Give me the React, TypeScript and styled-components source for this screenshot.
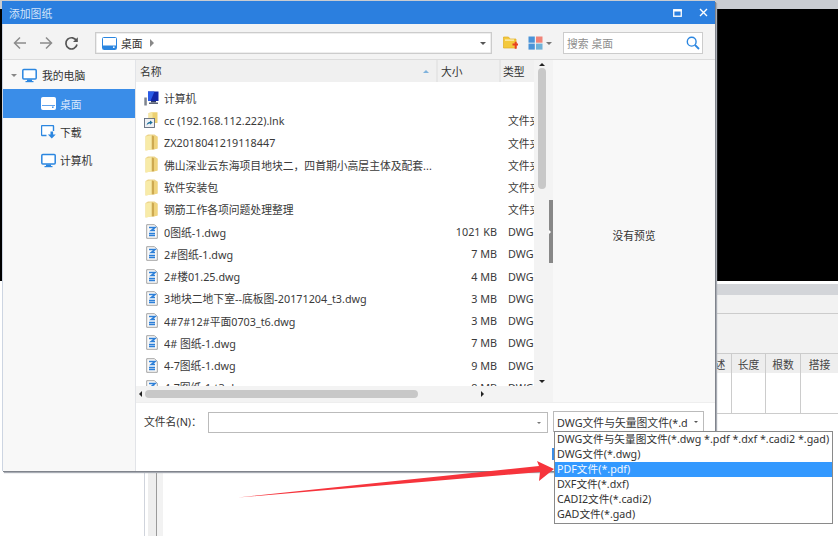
import React from "react";
import styled, { createGlobalStyle } from "styled-components";

const Global = createGlobalStyle`
  html, body { margin: 0; padding: 0; background: #fff; }
  body { width: 838px; height: 536px; overflow: hidden; font-family: "Noto Sans", "Noto Sans CJK SC", sans-serif; font-size: 10.8px; color: #333; }
  * { box-sizing: border-box; }
`;

const Page = styled.div`
  position: relative;
  width: 838px;
  height: 536px;
  overflow: hidden;
  display: flex;
  flex-direction: column;
  background: #fff;
`;
const TopStrip = styled.div`height: 9px; background: #c9ccd1; flex: none;`;
const BlackPane = styled.div`height: 272px; background: #000; flex: none;`;
const Lower = styled.div`
  flex: 1;
  display: flex;
  border-top: 3px solid #fff;
`;
const LeftCol = styled.div`
  width: 145px;
  flex: none;
  border-right: 1px solid #d0d4dc;
`;
const Band = styled.div<{ $w: number; $tone: string }>`
  width: ${(p) => p.$w}px;
  flex: none;
  background: ${(p) => p.$tone};
`;
const RightPanel = styled.div`
  flex: 1;
  display: flex;
  flex-direction: column;
  min-width: 0;
`;
const GreyBar = styled.div`height: 11px; background: #d3d5d9; flex: none;`;
const PanelStrip = styled.div<{ $h: number }>`
  height: ${(p) => p.$h}px;
  flex: none;
  background: #f2f2f2;
  border-bottom: 1px solid #ccc;
`;
const BgTable = styled.div`
  display: flex;
  justify-content: flex-end;
  height: 60px;
  flex: none;
  border-bottom: 1px solid #ccc;
`;
const BgCol = styled.div<{ $w: number }>`
  width: ${(p) => p.$w}px;
  display: flex;
  flex-direction: column;
  border-right: 1px solid #ccc;
  &:last-child { border-right: none; }
`;
const BgHead = styled.div`
  height: 19px;
  background: #eee;
  display: flex;
  align-items: center;
  justify-content: center;
  color: #444;
  white-space: nowrap;
`;

const Dialog = styled.div`
  position: absolute;
  left: 2px;
  top: 1px;
  width: 713px;
  height: 470px;
  display: flex;
  flex-direction: column;
  background: #fff;
  border-left: 1px solid #cdd5e2;
  box-shadow: 1px 1px 0 #80848c, 2px 2px 1px #a8acb4;
`;
const TitleBar = styled.div`
  height: 23px;
  flex: none;
  background: #2b7fdf;
  color: #d4e5fa;
  display: flex;
  align-items: center;
  padding: 0 7px 0 7px;
  font-size: 10.8px;
  margin-left: -1px;
`;
const TitleText = styled.span`flex: 1;`;
const WinButton = styled.span<{ $mr: number }>`
  display: flex;
  margin-right: ${(p) => p.$mr}px;
`;
const Toolbar = styled.div`
  height: 36px;
  flex: none;
  display: flex;
  align-items: center;
  background: #f3f3f3;
  border-bottom: 1px solid #dcdcdc;
  padding: 3px 0 0 10px;
`;
const NavButton = styled.span<{ $mr: number }>`
  display: flex;
  margin-right: ${(p) => p.$mr}px;
`;
const AddressBox = styled.div`
  width: 397px;
  height: 22px;
  border: 1px solid #ccc;
  box-shadow: inset 0 0 0 0.5px #ddd;
  background: #fff;
  display: flex;
  align-items: center;
  padding: 0 5px 0 6px;
  margin-right: 11px;
  color: #333;
`;
const AddressText = styled.span`margin: 0 7px 0 4px;`;
const Spacer = styled.span`flex: 1;`;
const Caret = styled.span<{ $dir: "up" | "down" | "left" | "right"; $c?: string; $s?: number }>`
  display: inline-block;
  flex: none;
  width: 0;
  height: 0;
  border: ${(p) => p.$s ?? 3}px solid transparent;
  ${(p) =>
    p.$dir === "down"
      ? `border-top-color:${p.$c ?? "#555"};border-bottom-width:0;`
      : p.$dir === "up"
      ? `border-bottom-color:${p.$c ?? "#555"};border-top-width:0;`
      : p.$dir === "left"
      ? `border-right-color:${p.$c ?? "#333"};border-left-width:0;`
      : `border-left-color:${p.$c ?? "#333"};border-right-width:0;`}
`;
const ToolIcon = styled.span<{ $mr: number }>`
  display: flex;
  align-items: center;
  gap: 3px;
  margin-right: ${(p) => p.$mr}px;
`;
const SearchBox = styled.div`
  width: 140px;
  height: 22px;
  border: 1px solid #ccc;
  background: #fff;
  display: flex;
  align-items: center;
  justify-content: space-between;
  padding: 0 2px 0 3px;
  color: #8e8e8e;
`;
const Body = styled.div`
  flex: 1;
  display: flex;
  min-height: 0;
`;
const Sidebar = styled.div`
  width: 133px;
  flex: none;
  background: #f8f8f8;
  border-right: 1px solid #e2e4e8;
  padding-top: 1px;
`;
const TreeRow = styled.div<{ $active?: boolean; $indent: number; $gap: number }>`
  height: 28.4px;
  display: flex;
  align-items: center;
  padding-left: ${(p) => p.$indent}px;
  gap: ${(p) => p.$gap}px;
  background: ${(p) => (p.$active ? "#3a8de8" : "transparent")};
  color: ${(p) => (p.$active ? "#d8e8fb" : "#333")};
`;
const Right = styled.div`
  flex: 1;
  min-width: 0;
  display: flex;
  flex-direction: column;
`;
const Panes = styled.div`
  height: 342px;
  flex: none;
  display: flex;
`;
const FileColumn = styled.div`
  width: 413px;
  flex: none;
  display: flex;
  flex-direction: column;
`;
const ListAndBar = styled.div`
  flex: 1;
  min-height: 0;
  display: flex;
`;
const ListArea = styled.div`
  width: 398px;
  flex: none;
  display: flex;
  flex-direction: column;
  min-height: 0;
`;
const HeaderRow = styled.div`
  height: 22px;
  flex: none;
  display: flex;
  background: #f0f0f0;
  color: #333;
  align-items: center;
`;
const HeadName = styled.div`
  width: 302px;
  padding: 0 7px 0 4px;
  height: 100%;
  display: flex;
  align-items: center;
  justify-content: space-between;
  border-right: 2px solid #e6e6e6;
`;
const HeadSize = styled.div`
  width: 63px;
  padding-left: 3px;
  height: 100%;
  display: flex;
  align-items: center;
  border-right: 2px solid #e6e6e6;
`;
const HeadType = styled.div`
  flex: 1;
  padding-left: 2px;
`;
const Rows = styled.div`
  flex: 1;
  min-height: 0;
  overflow: hidden;
  padding-top: 5px;
  background: #fff;
`;
const FileRow = styled.div`
  height: 22.25px;
  display: flex;
  align-items: center;
  color: #3a3a3a;
`;
const IconCell = styled.span`
  width: 28px;
  flex: none;
  display: flex;
  justify-content: center;
  padding-left: 3px;
`;
const NameCell = styled.span`
  width: 272px;
  flex: none;
  white-space: nowrap;
  overflow: hidden;
`;
const SizeCell = styled.span`
  width: 61px;
  flex: none;
  text-align: right;
  white-space: nowrap;
`;
const TypeCell = styled.span`
  margin-left: 11px;
  flex: 1;
  min-width: 0;
  white-space: nowrap;
  overflow: hidden;
`;
const VScroll = styled.div`
  width: 15px;
  flex: none;
  background: #f3f3f3;
  display: flex;
  flex-direction: column;
  align-items: center;
  padding: 3px 0 3px 1px;
`;
const VThumb = styled.div`
  width: 8px;
  height: 121px;
  margin-top: 2px;
  background: #c8c8c8;
  border-radius: 4px;
`;
const HScroll = styled.div`
  height: 16px;
  flex: none;
  background: #f3f3f3;
  display: flex;
  align-items: center;
  padding: 0 3px 0 3px;
`;
const HThumb = styled.div`
  width: 273px;
  height: 8px;
  margin-left: 3px;
  background: #c8c8c8;
  border-radius: 4px;
`;
const Splitter = styled.div`
  width: 4px;
  flex: none;
  background: #f3f3f3;
  display: flex;
  align-items: flex-start;
`;
const SplitGrip = styled.div`
  width: 4px;
  height: 63px;
  margin-top: 140px;
  background: #888;
  display: flex;
  align-items: center;
`;
const Preview = styled.div`
  flex: 1;
  background: #f8f8f8;
  display: flex;
  align-items: center;
  justify-content: center;
  padding-top: 8px;
  color: #333;
`;
const Footer = styled.div`
  flex: 1;
  background: #fff;
  display: flex;
  align-items: flex-start;
  padding: 9px 0 0 8px;
  border-top: 1px solid #eee;
`;
const FileLabel = styled.span`
  width: 64px;
  flex: none;
  line-height: 20px;
`;
const NameInput = styled.div`
  width: 340px;
  height: 21px;
  flex: none;
  border: 1px solid #bbb;
  background: #fff;
  display: flex;
  align-items: center;
  justify-content: flex-end;
  padding-right: 6px;
  margin-right: 5px;
`;
const TypeCombo = styled.div`
  width: 151px;
  height: 21px;
  flex: none;
  border: 1px solid #bbb;
  margin-top: -1px;
  background: #fff;
  display: flex;
  align-items: center;
  justify-content: space-between;
  padding: 0 5px 0 3px;
  white-space: nowrap;
  overflow: hidden;
`;
const HiddenEdge = styled.div`
  position: absolute;
  left: 552px;
  top: 448px;
  width: 2px;
  height: 12px;
  background: #3a8de8;
`;
const Dropdown = styled.div`
  position: absolute;
  left: 554px;
  top: 431px;
  width: 279px;
  height: 93px;
  background: #fff;
  border: 1px solid #8a8a8a;
  font-size: 10.7px;
`;
const Option = styled.div<{ $active?: boolean }>`
  height: 15px;
  line-height: 15px;
  padding-left: 2px;
  white-space: nowrap;
  background: ${(p) => (p.$active ? "#3399ff" : "transparent")};
  color: ${(p) => (p.$active ? "#f2f8ff" : "#333")};
`;
const ArrowLayer = styled.svg`
  position: absolute;
  left: 230px;
  top: 455px;
`;

const Monitor = ({ color = "#2b86e0", size = 15 }: { color?: string; size?: number }) => (
  <svg width={size} height={size} viewBox="0 0 15 15">
    <rect x="0.8" y="1.5" width="13.4" height="9.6" rx="1" fill="#fff" stroke={color} strokeWidth="1.5" />
    <rect x="5" y="11.5" width="5" height="1.6" fill={color} />
    <rect x="3.5" y="13" width="8" height="1.2" fill={color} />
  </svg>
);
const DesktopIcon = ({ light }: { light?: boolean }) => (
  <svg width="15" height="13" viewBox="0 0 15 13">
    <rect x="0.5" y="0.5" width="14" height="12" rx="1" fill="#fff" stroke={light ? "#fff" : "#2b86e0"} />
    <rect x="1" y="8.5" width="13" height="3.5" fill={light ? "#fff" : "#2b86e0"} />
    {light && <rect x="1" y="8" width="13" height="0.8" fill="#3a8de8" />}
    <rect x="11" y="9.5" width="1.6" height="1.4" fill={light ? "#3a8de8" : "#fff"} />
  </svg>
);
const DownloadIcon = () => (
  <svg width="15" height="14" viewBox="0 0 15 14">
    <path d="M5.5 10.5H1.5a1 1 0 0 1-1-1V1.5a1 1 0 0 1 1-1h10a1 1 0 0 1 1 1V6" fill="#fff" stroke="#2b86e0" strokeWidth="1.4" />
    <path d="M9.5 6.5h2.6v3h2.6l-3.9 4-3.9-4h2.6z" fill="#2b86e0" />
  </svg>
);
const FolderIcon = () => (
  <svg width="13" height="17" viewBox="0 0 13 17">
    <path d="M0.5 2 3 0.5H9.5L12.5 2.5V14.5L0.5 16.5z" fill="#ecd48a" />
    <path d="M0.5 2.5 6.8 1.2V15.4L0.5 16.5z" fill="#f8eba8" />
    <path d="M6.8 1.2 9.2 2.4V15.6L6.8 15.4z" fill="#cda950" />
    <path d="M9.2 2.4 12.5 2.8V14.5L9.2 15.6z" fill="#f0d47c" />
  </svg>
);
const DwgIcon = () => (
  <svg width="12" height="15" viewBox="0 0 12 15">
    <path d="M0.7 0.7H8.5L11.3 3.5V14.3H0.7z" fill="#fafafa" stroke="#9a9a9a" strokeWidth="0.9" />
    <path d="M3 3.6H9L5.2 6.6H9M3 9.5h6M3 11.6h6" fill="none" stroke="#2c7fd8" strokeWidth="1.5" />
  </svg>
);
const ComputerIcon = () => (
  <svg width="15" height="15" viewBox="0 0 15 15">
    <rect x="0.3" y="6.5" width="2.5" height="8" fill="#7d838e" />
    <path d="M4 0.5h10.5v9.5H4z" fill="#1227a8" />
    <path d="M4 0.5h6.5L6.5 10H4z" fill="#2a5ce8" />
    <rect x="7" y="10" width="5" height="1.5" fill="#2f3a66" />
    <rect x="5" y="11.5" width="9" height="1.5" fill="#5b6478" />
  </svg>
);
const LnkIcon = () => (
  <svg width="15" height="16" viewBox="0 0 15 16">
    <path d="M4.5 1 8 0.3H13.5V11H4.5z" fill="#ecd070" />
    <path d="M5 1 8.5 0.5V8H5z" fill="#f6e7a2" />
    <rect x="0.5" y="6.5" width="10" height="9" fill="#eef0f4" stroke="#5f6b7c" strokeWidth="0.9" />
    <path d="M2.5 13.5 C3 10.5 5 9.8 6 9.8 V8.4 L8.8 10.6 6 12.8 V11.5 C4.8 11.5 3.5 12 2.5 13.5z" fill="#1d6f9c" />
  </svg>
);

type F = { name: string; icon: "pc" | "lnk" | "folder" | "dwg"; size?: string; type?: string };
const files: F[] = [
  { name: "计算机", icon: "pc" },
  { name: "cc (192.168.112.222).lnk", icon: "lnk", type: "文件夹" },
  { name: "ZX2018041219118447", icon: "folder", type: "文件夹" },
  { name: "佛山深业云东海项目地块二，四首期小高层主体及配套...", icon: "folder", type: "文件夹" },
  { name: "软件安装包", icon: "folder", type: "文件夹" },
  { name: "钢筋工作各项问题处理整理", icon: "folder", type: "文件夹" },
  { name: "0图纸-1.dwg", icon: "dwg", size: "1021 KB", type: "DWG" },
  { name: "2#图纸-1.dwg", icon: "dwg", size: "7 MB", type: "DWG" },
  { name: "2#楼01.25.dwg", icon: "dwg", size: "4 MB", type: "DWG" },
  { name: "3地块二地下室--底板图-20171204_t3.dwg", icon: "dwg", size: "3 MB", type: "DWG" },
  { name: "4#7#12#平面0703_t6.dwg", icon: "dwg", size: "3 MB", type: "DWG" },
  { name: "4# 图纸-1.dwg", icon: "dwg", size: "7 MB", type: "DWG" },
  { name: "4-7图纸-1.dwg", icon: "dwg", size: "9 MB", type: "DWG" },
  { name: "4-7图纸-1-t3.dwg", icon: "dwg", size: "8 MB", type: "DWG" },
];

const iconFor = (k: F["icon"]) =>
  k === "pc" ? <ComputerIcon /> : k === "lnk" ? <LnkIcon /> : k === "folder" ? <FolderIcon /> : <DwgIcon />;

const options = [
  "DWG文件与矢量图文件(*.dwg *.pdf *.dxf *.cadi2 *.gad)",
  "DWG文件(*.dwg)",
  "PDF文件(*.pdf)",
  "DXF文件(*.dxf)",
  "CADI2文件(*.cadi2)",
  "GAD文件(*.gad)",
];

export default function App() {
  return (
    <Page>
      <Global />
      <TopStrip />
      <BlackPane />
      <Lower>
        <LeftCol />
        <Band $w={3} $tone="#fff" />
        <Band $w={8} $tone="#eeeeee" />
        <Band $w={1} $tone="#9a9a9a" />
        <Band $w={6} $tone="#f2f2f2" />
        <RightPanel>
          <GreyBar />
          <PanelStrip $h={19} />
          <PanelStrip $h={40} />
          <BgTable>
            <BgCol $w={34}><BgHead>描述</BgHead></BgCol>
            <BgCol $w={34}><BgHead>长度</BgHead></BgCol>
            <BgCol $w={35}><BgHead>根数</BgHead></BgCol>
            <BgCol $w={37}><BgHead>搭接</BgHead></BgCol>
          </BgTable>
        </RightPanel>
      </Lower>

      <Dialog>
        <TitleBar>
          <TitleText>添加图纸</TitleText>
          <WinButton $mr={17}>
            <svg width="9" height="8" viewBox="0 0 9 8">
              <rect x="0.75" y="0.75" width="7.5" height="6.5" fill="none" stroke="#fff" strokeWidth="1.3" />
              <rect x="0.5" y="0.5" width="8" height="2" fill="#fff" />
            </svg>
          </WinButton>
          <WinButton $mr={0}>
            <svg width="9" height="9" viewBox="0 0 9 9">
              <path d="M1 1l7 7M8 1l-7 7" stroke="#fff" strokeWidth="1.4" />
            </svg>
          </WinButton>
        </TitleBar>
        <Toolbar>
          <NavButton $mr={12}>
            <svg width="14" height="14" viewBox="0 0 14 14"><path d="M13 7H1.5M7 1.5 1.5 7 7 12.5" fill="none" stroke="#8c8c8c" strokeWidth="1.5" /></svg>
          </NavButton>
          <NavButton $mr={11}>
            <svg width="14" height="14" viewBox="0 0 14 14"><path d="M1 7h11.5M7 1.5 12.5 7 7 12.5" fill="none" stroke="#8c8c8c" strokeWidth="1.5" /></svg>
          </NavButton>
          <NavButton $mr={16}>
            <svg width="15" height="15" viewBox="0 0 15 15"><path d="M12.6 5A5.6 5.6 0 1 0 13 8.5" fill="none" stroke="#555" strokeWidth="1.7" /><path d="M13.8 1.2V6H9z" fill="#555" /></svg>
          </NavButton>
          <AddressBox>
            <DesktopIcon />
            <AddressText>桌面</AddressText>
            <Caret $dir="right" $c="#888" $s={4} />
            <Spacer />
            <Caret $dir="down" $c="#555" />
          </AddressBox>
          <ToolIcon $mr={10}>
            <svg width="15" height="14" viewBox="0 0 15 14">
              <path d="M0.5 1H5.5L7 3H13V12H0.5z" fill="#f4c93c" stroke="#dfae22" strokeWidth="0.7" />
              <rect x="2" y="3.5" width="9" height="1.2" fill="#fff3bf" />
              <path d="M9.5 7.5h2.2V5.7h2v1.8H15v2h-1.3v3.2h-2V9.5H9.5z" fill="#e8421f" />
            </svg>
          </ToolIcon>
          <ToolIcon $mr={11}>
            <svg width="15" height="14" viewBox="0 0 15 14">
              <rect x="0.5" y="0.5" width="6.3" height="6.2" fill="#4a93d8" />
              <rect x="8" y="0.5" width="6.5" height="6.2" fill="#f08378" />
              <rect x="0.5" y="7.6" width="6.3" height="6" fill="#4a93d8" />
              <rect x="8" y="7.6" width="6.5" height="6" fill="#6fb2d8" />
            </svg>
            <Caret $dir="down" $c="#777" />
          </ToolIcon>
          <SearchBox>
            <span>搜索 桌面</span>
            <svg width="14" height="14" viewBox="0 0 14 14">
              <circle cx="5.7" cy="5.7" r="4.4" fill="none" stroke="#2b86e0" strokeWidth="1.4" />
              <path d="M9 9l4 4" stroke="#2b86e0" strokeWidth="1.8" />
            </svg>
          </SearchBox>
        </Toolbar>
        <Body>
          <Sidebar>
            <TreeRow $indent={8} $gap={5}>
              <Caret $dir="down" $c="#888" $s={3.5} />
              <Monitor />
              <span>我的电脑</span>
            </TreeRow>
            <TreeRow $active $indent={38} $gap={4}>
              <DesktopIcon light />
              <span>桌面</span>
            </TreeRow>
            <TreeRow $indent={38} $gap={4}>
              <DownloadIcon />
              <span>下载</span>
            </TreeRow>
            <TreeRow $indent={38} $gap={4}>
              <Monitor />
              <span>计算机</span>
            </TreeRow>
          </Sidebar>
          <Right>
            <Panes>
              <FileColumn>
                <ListAndBar>
                  <ListArea>
                    <HeaderRow>
                      <HeadName>
                        <span>名称</span>
                        <Caret $dir="up" $c="#7fb2dc" />
                      </HeadName>
                      <HeadSize>大小</HeadSize>
                      <HeadType>类型</HeadType>
                    </HeaderRow>
                    <Rows>
                      {files.map((f) => (
                        <FileRow key={f.name}>
                          <IconCell>{iconFor(f.icon)}</IconCell>
                          <NameCell>{f.name}</NameCell>
                          <SizeCell>{f.size}</SizeCell>
                          <TypeCell>{f.type}</TypeCell>
                        </FileRow>
                      ))}
                    </Rows>
                  </ListArea>
                  <VScroll>
                    <Caret $dir="up" $c="#222" $s={3.5} />
                    <VThumb />
                    <Spacer />
                    <Caret $dir="down" $c="#222" $s={3.5} />
                  </VScroll>
                </ListAndBar>
                <HScroll>
                  <Caret $dir="left" $c="#222" $s={3.5} />
                  <HThumb />
                  <Spacer />
                  <Caret $dir="right" $c="#222" $s={3.5} />
                  <Spacer />
                </HScroll>
              </FileColumn>
              <Splitter>
                <SplitGrip>
                  <Caret $dir="right" $c="#fff" $s={2} />
                </SplitGrip>
              </Splitter>
              <Preview>没有预览</Preview>
            </Panes>
            <Footer>
              <FileLabel>文件名(N)：</FileLabel>
              <NameInput>
                <Caret $dir="down" $c="#777" $s={2.5} />
              </NameInput>
              <TypeCombo>
                <span>DWG文件与矢量图文件(*.d</span>
                <Caret $dir="down" $c="#555" $s={2.5} />
              </TypeCombo>
            </Footer>
          </Right>
        </Body>
      </Dialog>

      <HiddenEdge />
      <Dropdown>
        {options.map((o, i) => (
          <Option key={o} $active={i === 2}>{o}</Option>
        ))}
      </Dropdown>
      <ArrowLayer width="330" height="50" viewBox="0 0 330 50">
        <path d="M8 42.5 309 11 307 6 324 14 309 26 310 17z" fill="#f6343c" />
      </ArrowLayer>
    </Page>
  );
}
